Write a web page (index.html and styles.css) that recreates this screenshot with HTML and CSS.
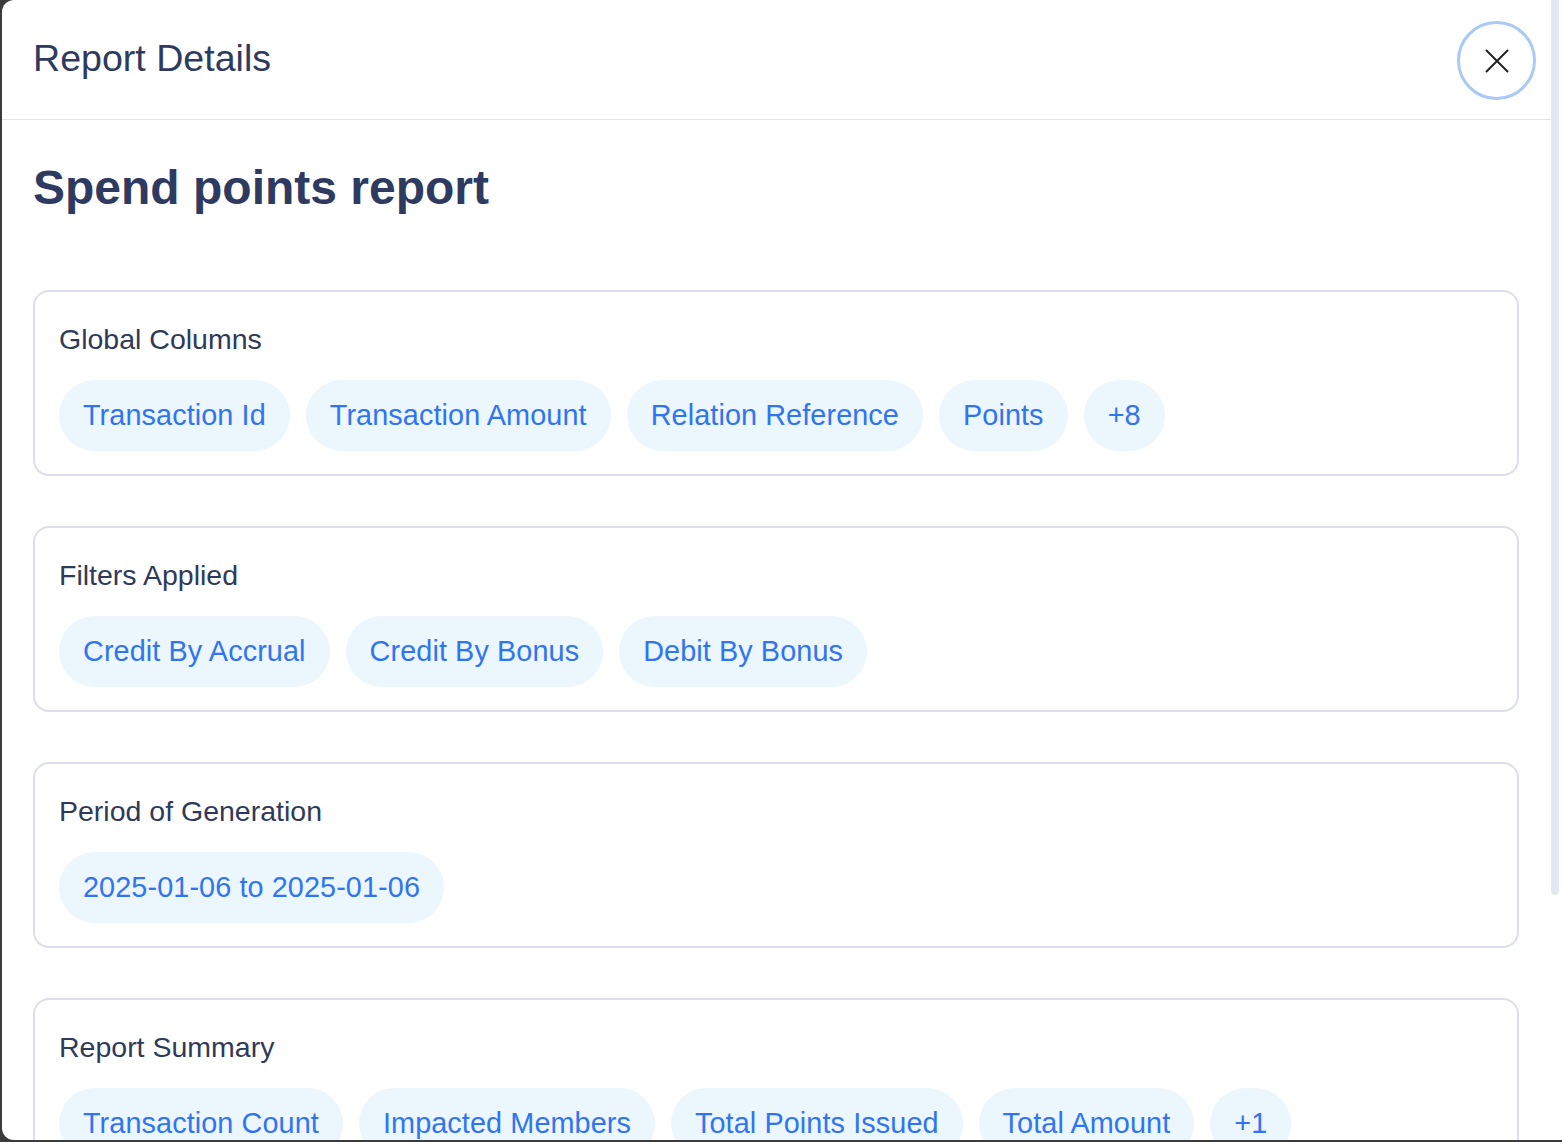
FILE: index.html
```html
<!DOCTYPE html>
<html lang="en">
<head>
    <meta charset="UTF-8">
    <meta name="viewport" content="width=device-width, initial-scale=1.0">
    <title>Report Details</title>
    <link rel="stylesheet" href="styles.css">
</head>
<body>
    <div class="modal">
        <div class="modal-header">
            <h1>Report Details</h1>
            <button class="close-btn" aria-label="Close">
                <svg width="24" height="24" viewBox="0 0 24 24" fill="none" stroke="#222" stroke-width="2" stroke-linecap="round">
                    <path d="M1.5 1.5 L22.5 22.5 M22.5 1.5 L1.5 22.5"/>
                </svg>
            </button>
        </div>

        <div class="modal-body">
            <h2 class="report-title">Spend points report</h2>

            <div class="detail-card">
                <h3 class="detail-card-title">Global Columns</h3>
                <div class="chip-list">
                    <span class="chip">Transaction Id</span>
                    <span class="chip">Transaction Amount</span>
                    <span class="chip">Relation Reference</span>
                    <span class="chip">Points</span>
                    <span class="chip">+8</span>
                </div>
            </div>

            <div class="detail-card">
                <h3 class="detail-card-title">Filters Applied</h3>
                <div class="chip-list">
                    <span class="chip">Credit By Accrual</span>
                    <span class="chip">Credit By Bonus</span>
                    <span class="chip">Debit By Bonus</span>
                </div>
            </div>

            <div class="detail-card">
                <h3 class="detail-card-title">Period of Generation</h3>
                <div class="chip-list">
                    <span class="chip">2025-01-06 to 2025-01-06</span>
                </div>
            </div>

            <div class="detail-card">
                <h3 class="detail-card-title">Report Summary</h3>
                <div class="chip-list">
                    <span class="chip">Transaction Count</span>
                    <span class="chip">Impacted Members</span>
                    <span class="chip">Total Points Issued</span>
                    <span class="chip">Total Amount</span>
                    <span class="chip">+1</span>
                </div>
            </div>
        </div>

        <div class="scroll-thumb"></div>
    </div>
</body>
</html>
```

FILE: styles.css
```css
* {
    box-sizing: border-box;
}

body {
    margin: 0;
    background-color: #3b3b3b;
    font-family: "Liberation Sans", Arial, Helvetica, sans-serif;
    color: #2f3b5c;
    overflow: hidden;
}

.modal {
    position: relative;
    margin-left: 2px;
    height: 1140px;
    background-color: #fff;
    border-radius: 12px 0 0 12px;
    overflow: hidden;
    padding-right: 11px;
}

.modal-header {
    height: 120px;
    display: flex;
    align-items: center;
    justify-content: space-between;
    padding: 2px 15px 0 31px;
    border-bottom: 1px solid #e4e4e6;
}

.modal-header h1 {
    margin: 0;
    margin-top: -4px;
    font-size: 37.6px;
    font-weight: 400;
    color: #2f3b5e;
}

.close-btn {
    width: 79px;
    height: 79px;
    border-radius: 50%;
    border: 3px solid #a9c9f6;
    background: #fff;
    display: flex;
    align-items: center;
    justify-content: center;
    padding: 0;
    cursor: pointer;
}

.modal-body {
    padding: 0 32px 0 31px;
    display: flex;
    flex-direction: column;
    gap: 50px;
}

.report-title {
    margin: 40px 0 24px;
    font-size: 48px;
    line-height: 56px;
    font-weight: 700;
    color: #2e3a5f;
}

.detail-card {
    border: 2px solid #dcdeec;
    border-radius: 16px;
    padding: 31px 23px 23px 24px;
}

.detail-card-title {
    margin: 0 0 25px;
    font-size: 28.5px;
    line-height: 32px;
    font-weight: 400;
    color: #2f3a58;
}

.chip-list {
    display: flex;
    flex-wrap: wrap;
    gap: 16px;
}

.chip {
    display: inline-flex;
    align-items: center;
    height: 71px;
    padding: 0 24px;
    border-radius: 36px;
    background-color: #ebf6fd;
    color: #3174f1;
    font-size: 28.8px;
    letter-spacing: 0.1px;
    white-space: nowrap;
}

.scroll-thumb {
    position: absolute;
    top: 0;
    right: 3px;
    width: 8px;
    height: 895px;
    border-radius: 0 0 4px 4px;
    background-color: #e2e8f3;
}
```
